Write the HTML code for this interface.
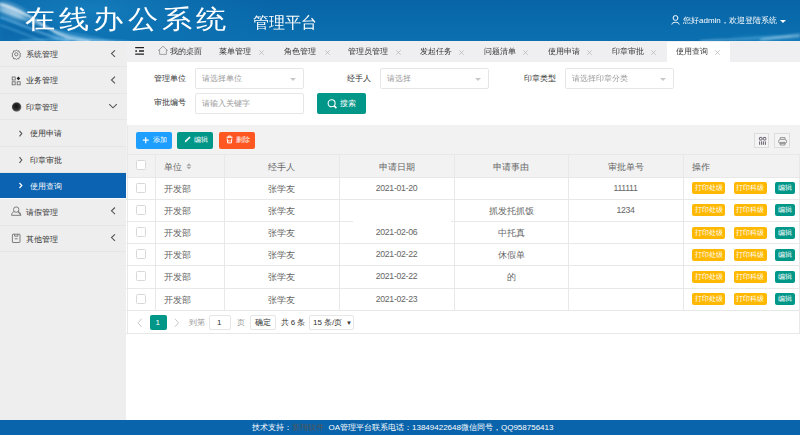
<!DOCTYPE html>
<html><head><meta charset="utf-8">
<style>
*{margin:0;padding:0;box-sizing:border-box;}
html,body{width:800px;height:435px;overflow:hidden;background:#fff;font-family:"Liberation Sans",sans-serif;color:#333;}
.abs{position:absolute;}
.t8{font-size:8px;line-height:10px;white-space:nowrap;position:absolute;}
#hdr{position:absolute;left:0;top:0;width:800px;height:41px;background:#0b68b1;overflow:hidden;}
#title{position:absolute;left:25px;top:3.5px;font-size:30px;letter-spacing:4.2px;color:#fff;white-space:nowrap;line-height:36px;transform:scaleY(0.86);transform-origin:0 0;}
#sub{position:absolute;left:253px;top:12.5px;font-size:16px;color:#fff;white-space:nowrap;line-height:20px;}
#side{position:absolute;left:0;top:41px;width:126.5px;height:379px;background:#eeeeee;}
.si{position:absolute;left:0;width:126.5px;height:26.4px;border-bottom:1px solid #e6e6e6;color:#333;}
.si .t{left:26px;top:9px;}
.si .sub{left:30px;top:9px;}
.si.act{background:#0b63b1;color:#fff;border-bottom:1px solid #fafafa;}
#tabs{position:absolute;left:126px;top:41px;width:674px;height:21px;background:#efeff1;}
.tab{color:#333;top:6px;}
.x{position:absolute;top:7px;}
.lbl{color:#333;}
.inp{position:absolute;height:21px;border:1px solid #e6e6e6;border-radius:2px;background:#fff;}
.inp .t8{left:6px;top:5px;color:#999;}
.caret{position:absolute;width:0;height:0;border-left:3.5px solid transparent;border-right:3.5px solid transparent;border-top:3.5px solid #c8c8c8;top:8.5px;}
.btn{position:absolute;border-radius:2px;color:#fff;}
.cell{position:absolute;color:#666;}
.tb{font-size:8.6px !important;}
.hl{position:absolute;background:#e8e8e8;}
.cb{position:absolute;width:10px;height:10px;border:1px solid #d8d8d8;border-radius:1.5px;background:#fff;}
.ob{position:absolute;height:12px;width:33px;background:#ffb800;border-radius:2px;}
.ob .t8{color:#fff;left:0;width:33px;text-align:center;top:1px;font-size:7px;}
.eb{position:absolute;height:12px;width:20px;background:#009688;border-radius:2px;}
.eb .t8{color:#fff;left:0;width:20px;text-align:center;top:1px;font-size:7px;}
</style></head><body>
<div id="hdr">
  <svg class="abs" style="left:0;top:0" width="800" height="41">
    <defs>
      <filter id="bl" x="-50%" y="-50%" width="200%" height="200%"><feGaussianBlur stdDeviation="3"/></filter>
      <filter id="bl1" x="-20%" y="-50%" width="140%" height="200%"><feGaussianBlur stdDeviation="0.9"/></filter>
      <linearGradient id="hg" x1="0" y1="0" x2="0" y2="1"><stop offset="0" stop-color="#0864a6"/><stop offset="0.55" stop-color="#096bac"/><stop offset="1" stop-color="#0c70b0"/></linearGradient>
      <radialGradient id="hg2" cx="90" cy="8" r="200" gradientUnits="userSpaceOnUse" gradientTransform="translate(90 8) scale(1 0.25) translate(-90 -8)"><stop offset="0" stop-color="#1a85c4" stop-opacity="0.7"/><stop offset="0.6" stop-color="#137dbd" stop-opacity="0.25"/><stop offset="1" stop-color="#0f74bb" stop-opacity="0"/></radialGradient>
    </defs>
    <rect x="0" y="0" width="800" height="41" fill="url(#hg)"/>
    <rect x="0" y="0" width="800" height="41" fill="url(#hg2)"/>
    <rect x="0" y="22" width="50" height="19" fill="#0a5ea3" opacity="0.35" filter="url(#bl)"/>
    <ellipse cx="12" cy="11" rx="16" ry="4.5" transform="rotate(24 12 11)" fill="#f0f9ff" opacity="0.75" filter="url(#bl)"/>
    <ellipse cx="80" cy="39" rx="30" ry="3" transform="rotate(10 80 39)" fill="#9fdcff" opacity="0.45" filter="url(#bl)"/>
    <g fill="none" filter="url(#bl1)">
      <path d="M0,4 C15,8 30,16 48,28 C60,36 75,41 90,42" stroke="#ffffff" stroke-width="1.3" opacity="0.95"/>
      <path d="M0,10 C20,16 45,28 70,36 C85,40 100,42 115,42" stroke="#d8f2ff" stroke-width="1.2" opacity="0.7"/>
      <path d="M0,17 C20,24 40,33 60,39 L70,42" stroke="#9fdaff" stroke-width="1.4" opacity="0.7"/>
      <path d="M0,25 C15,30 30,36 45,42" stroke="#7cc8f3" stroke-width="1.2" opacity="0.6"/>
      <path d="M20,41 C50,38 90,39 130,42" stroke="#8fd4f8" stroke-width="1.5" opacity="0.5"/>
      <path d="M700,41 C740,39 770,38 800,34" stroke="#bfe9ff" stroke-width="1.2" opacity="0.6"/>
      <path d="M760,40 C775,38 790,37 800,36" stroke="#ffffff" stroke-width="1.2" opacity="0.8"/>
    </g>
    <ellipse cx="770" cy="40" rx="40" ry="3" fill="#3aa3d8" opacity="0.45" filter="url(#bl)"/>
  </svg>
  <div id="title">在线办公系统</div>
  <div id="sub">管理平台</div>
  <svg class="abs" style="left:671px;top:15px" width="9" height="10"><circle cx="4.5" cy="3" r="2.4" fill="none" stroke="#fff" stroke-width="1"/><path d="M0.8,9.5 C1,6.5 8,6.5 8.2,9.5" fill="none" stroke="#fff" stroke-width="1"/></svg>
  <div class="t8" style="left:683px;top:16px;color:#fff;">您好admin，欢迎登陆系统</div>
  <div class="caret" style="left:780px;top:20px;border-top-color:#fff;border-left-width:3.5px;border-right-width:3.5px;"></div>
</div>
<div id="side">
<div class="si" style="top:0.0px"><span class="t8 t">系统管理</span></div>
<div class="si" style="top:26.4px"><span class="t8 t">业务管理</span></div>
<div class="si" style="top:52.8px"><span class="t8 t">印章管理</span></div>
<div class="si" style="top:79.2px"><span class="t8 sub">使用申请</span></div>
<div class="si" style="top:105.6px"><span class="t8 sub">印章审批</span></div>
<div class="si act" style="top:132.0px"><span class="t8 sub">使用查询</span></div>
<div class="si" style="top:158.4px"><span class="t8 t">请假管理</span></div>
<div class="si" style="top:184.8px"><span class="t8 t">其他管理</span></div>
</div>

<svg class="abs" style="left:0;top:41px" width="126" height="220">
 <g fill="none" stroke="#707070" stroke-width="0.9">
  <circle cx="16.3" cy="13.3" r="1.6"/>
  <path d="M16.3,9 L17.4,10.1 L19,9.9 L19.2,11.5 L20.6,12.5 L19.9,14 L20.6,15.3 L19.1,16.3 L18.9,17.8 L17.4,17.6 L16.3,18.6 L15.2,17.6 L13.6,17.8 L13.4,16.3 L12,15.3 L12.7,13.9 L12,12.5 L13.4,11.5 L13.6,9.9 L15.2,10.1 Z"/>
  <rect x="12.2" y="36" width="3" height="3"/><rect x="12.2" y="40.8" width="3" height="3"/><rect x="17.2" y="40.8" width="3" height="3"/>
  <path d="M9,51.5" />
  <circle cx="16.2" cy="168.6" r="2.7"/>
  <path d="M11.6,174.3 C11.8,171.2 13.5,170.6 14.4,170.8 M18,170.8 C18.9,170.6 20.6,171.2 20.8,174.3 Z M11.6,174.3 L20.8,174.3"/>
  <rect x="12.4" y="193.2" width="7.6" height="8.3" rx="0.5"/>
  <path d="M14.6,193.2 L14.6,195.2 L17.8,195.2 L17.8,193.2 M14.8,197.8 L17.6,197.8"/>
 </g>
 <path d="M18.4,35.6 L20.2,37.4 L18.4,39.2 L16.6,37.4 Z" fill="#222"/>
 <defs><radialGradient id="rg" cx="0.45" cy="0.4" r="0.6"><stop offset="0" stop-color="#111"/><stop offset="0.7" stop-color="#333"/><stop offset="1" stop-color="#777"/></radialGradient></defs>
 <circle cx="16.6" cy="66" r="4.6" fill="url(#rg)"/><circle cx="16.6" cy="66" r="4.3" fill="none" stroke="#555" stroke-width="0.6" opacity="0.6"/>
 <g fill="none" stroke="#555" stroke-width="1.1">
  <path d="M115,9.3 L111.5,12.6 L115,15.9"/>
  <path d="M115,35.7 L111.5,39 L115,42.3"/>
  <path d="M109.2,63.2 L113,66.8 L116.8,63.2"/>
  <path d="M115,166.5 L111.5,169.8 L115,173.1"/>
  <path d="M115,193.3 L111.5,196.6 L115,199.9"/>
  <path d="M19.5,89.8 L21.8,92.6 L19.5,95.4"/>
  <path d="M19.5,116.2 L21.8,119 L19.5,121.8"/>
 </g>
 <path d="M19.5,142 L21.8,144.5 L19.5,147" fill="none" stroke="#fff" stroke-width="1.2"/>
</svg>
<div id="tabs">
<div class="abs" style="left:541px;top:1px;width:63px;height:20px;background:#fff;"></div>
<svg class="abs" style="left:0;top:0" width="60" height="21"><g stroke="#222" stroke-width="1.3"><path d="M9.2,6.6 L18,6.6 M13,10 L18,10 M9.2,13.2 L18,13.2"/></g><rect x="9.3" y="9.3" width="1.7" height="1.5" fill="#222"/><path d="M32,9.9 L37,5.2 L42,9.9 M33.6,8.6 L33.6,13.4 L40.4,13.4 L40.4,8.6" fill="none" stroke="#999" stroke-width="0.9" stroke-linejoin="round"/></svg>
<div class="t8 tab" style="left:44px;">我的桌面</div>
<div class="t8 tab" style="left:93px;">菜单管理</div>
<svg class="abs" style="left:132.5px;top:9px" width="5" height="5"><path d="M0.3,0.3 L4.7,4.7 M4.7,0.3 L0.3,4.7" stroke="#b8b8b8" stroke-width="0.8"/></svg>
<div class="t8 tab" style="left:157.5px;">角色管理</div>
<svg class="abs" style="left:199px;top:9px" width="5" height="5"><path d="M0.3,0.3 L4.7,4.7 M4.7,0.3 L0.3,4.7" stroke="#b8b8b8" stroke-width="0.8"/></svg>
<div class="t8 tab" style="left:222px;">管理员管理</div>
<svg class="abs" style="left:269.5px;top:9px" width="5" height="5"><path d="M0.3,0.3 L4.7,4.7 M4.7,0.3 L0.3,4.7" stroke="#b8b8b8" stroke-width="0.8"/></svg>
<div class="t8 tab" style="left:294px;">发起任务</div>
<svg class="abs" style="left:333px;top:9px" width="5" height="5"><path d="M0.3,0.3 L4.7,4.7 M4.7,0.3 L0.3,4.7" stroke="#b8b8b8" stroke-width="0.8"/></svg>
<div class="t8 tab" style="left:357.5px;">问题清单</div>
<svg class="abs" style="left:396.5px;top:9px" width="5" height="5"><path d="M0.3,0.3 L4.7,4.7 M4.7,0.3 L0.3,4.7" stroke="#b8b8b8" stroke-width="0.8"/></svg>
<div class="t8 tab" style="left:421.5px;">使用申请</div>
<svg class="abs" style="left:461px;top:9px" width="5" height="5"><path d="M0.3,0.3 L4.7,4.7 M4.7,0.3 L0.3,4.7" stroke="#b8b8b8" stroke-width="0.8"/></svg>
<div class="t8 tab" style="left:486px;">印章审批</div>
<svg class="abs" style="left:525px;top:9px" width="5" height="5"><path d="M0.3,0.3 L4.7,4.7 M4.7,0.3 L0.3,4.7" stroke="#b8b8b8" stroke-width="0.8"/></svg>
<div class="t8 tab" style="left:549.5px;">使用查询</div>
<svg class="abs" style="left:588.5px;top:9px" width="5" height="5"><path d="M0.3,0.3 L4.7,4.7 M4.7,0.3 L0.3,4.7" stroke="#b8b8b8" stroke-width="0.8"/></svg>
</div>
<div class="abs" style="left:127px;top:62px;width:673px;height:63px;background:#fff;">
  <div class="t8 lbl" style="left:27px;top:12px;">管理单位</div>
  <div class="inp" style="left:68px;top:6px;width:109px;"><span class="t8">请选择单位</span><div class="caret" style="left:94px;"></div></div>
  <div class="t8 lbl" style="left:220px;top:12px;">经手人</div>
  <div class="inp" style="left:253px;top:6px;width:109px;"><span class="t8">请选择</span><div class="caret" style="left:94px;"></div></div>
  <div class="t8 lbl" style="left:397px;top:12px;">印章类型</div>
  <div class="inp" style="left:438px;top:6px;width:109px;"><span class="t8">请选择印章分类</span><div class="caret" style="left:94px;"></div></div>
  <div class="t8 lbl" style="left:27px;top:36px;">审批编号</div>
  <div class="inp" style="left:68px;top:30.5px;width:109px;"><span class="t8">请输入关键字</span></div>
  <div class="btn" style="left:190px;top:30.5px;width:49px;height:21px;background:#009688;"><svg class="abs" style="left:10px;top:6px" width="11" height="10"><circle cx="4.6" cy="4.3" r="3.5" fill="none" stroke="#fff" stroke-width="1.1"/><path d="M7.2,6.9 L9.4,9.1" stroke="#fff" stroke-width="1.6"/></svg><span class="t8" style="left:22.5px;top:6.5px;color:#fff;">搜索</span></div>
</div>
<div class="abs" style="left:126px;top:125px;width:674px;height:295px;background:#fff;">
<div class="abs" style="left:0;top:0;width:674px;height:29px;background:#f2f2f2;"></div>
<div class="btn" style="left:10px;top:6.5px;width:36px;height:17px;background:#1e9fff;"><span class="t8" style="left:16.5px;top:3.5px;color:#fff;font-size:7px;">添加</span></div>
<div class="btn" style="left:51px;top:6.5px;width:36px;height:17px;background:#009688;"><span class="t8" style="left:16.5px;top:3.5px;color:#fff;font-size:7px;">编辑</span></div>
<div class="btn" style="left:93px;top:6.5px;width:36px;height:17px;background:#ff5722;"><span class="t8" style="left:16.5px;top:3.5px;color:#fff;font-size:7px;">删除</span></div>
<svg class="abs" style="left:0;top:3px" width="140" height="30"><path d="M16.8,12.2 L22.7,12.2 M19.75,9.2 L19.75,15.3" stroke="#fff" stroke-width="1.2"/><path d="M58.8,14.5 L59.2,12.6 L63.4,8.4 L64.6,9.6 L60.4,13.8 Z" fill="#fff"/><path d="M100.5,9.3 L106.5,9.3 M102.2,9.3 L102.2,8.1 L104.8,8.1 L104.8,9.3 M101.2,10.5 L101.6,14.9 L105.4,14.9 L105.8,10.5" fill="none" stroke="#fff" stroke-width="1"/><path d="M102.6,11.9 L102.8,13.5 M104.2,11.9 L104,13.5" stroke="#fff" stroke-width="0.7"/></svg>
<div class="abs" style="left:628px;top:8px;width:15px;height:15px;border:1px solid #dcdcdc;background:#f4f4f4;"></div>
<div class="abs" style="left:648px;top:8px;width:16px;height:15px;border:1px solid #dcdcdc;background:#f4f4f4;"></div>
<svg class="abs" style="left:628px;top:8px" width="40" height="16"><g fill="none" stroke="#5a5060" stroke-width="0.9"><rect x="5.4" y="4.4" width="2.6" height="2.6" rx="0.6"/><rect x="9.2" y="4.4" width="2.6" height="2.6" rx="0.6"/><path d="M5.6,8.4 L5.6,11.8 M7.6,8.4 L7.6,11.8 M9.4,8.4 L9.4,11.8 M11.4,8.4 L11.4,11.8"/></g><g fill="none" stroke="#8a8a8a" stroke-width="0.9"><path d="M26.2,6.4 L26.2,4.6 L31,4.6 L31,6.4"/><rect x="24.6" y="6.4" width="8" height="4" rx="2"/><path d="M26.2,9.4 L31,9.4 L31,12 L26.2,12 Z"/></g></svg>
</div>
<div class="abs" style="left:126px;top:154px;width:674px;height:22.6px;background:#f2f2f2;"></div>
<div class="hl" style="left:126px;top:154.0px;width:674px;height:1px;"></div>
<div class="hl" style="left:126px;top:176.6px;width:674px;height:1px;"></div>
<div class="hl" style="left:126px;top:198.8px;width:674px;height:1px;"></div>
<div class="hl" style="left:126px;top:221.0px;width:674px;height:1px;"></div>
<div class="hl" style="left:126px;top:243.2px;width:674px;height:1px;"></div>
<div class="hl" style="left:126px;top:265.4px;width:674px;height:1px;"></div>
<div class="hl" style="left:126px;top:287.6px;width:674px;height:1px;"></div>
<div class="hl" style="left:126px;top:309.8px;width:674px;height:1px;"></div>
<div class="hl" style="left:126px;top:333px;width:674px;height:1px;"></div>
<div class="hl" style="left:126.5px;top:154px;width:1px;height:155.8px;"></div>
<div class="hl" style="left:155.0px;top:154px;width:1px;height:155.8px;"></div>
<div class="hl" style="left:223.5px;top:154px;width:1px;height:155.8px;"></div>
<div class="hl" style="left:339.0px;top:154px;width:1px;height:155.8px;"></div>
<div class="hl" style="left:454.0px;top:154px;width:1px;height:155.8px;"></div>
<div class="hl" style="left:568.0px;top:154px;width:1px;height:155.8px;"></div>
<div class="hl" style="left:683.0px;top:154px;width:1px;height:155.8px;"></div>
<div class="hl" style="left:799.0px;top:154px;width:1px;height:155.8px;"></div>
<div class="hl" style="left:126.5px;top:309.8px;width:1px;height:23.2px;"></div>
<div class="hl" style="left:126.5px;top:125px;width:1px;height:29px;background:#e8e8e8;"></div>
<div class="hl" style="left:799px;top:309.8px;width:1px;height:23.2px;"></div>
<div class="cb" style="left:135.5px;top:160.0px;"></div>
<div class="t8 tb" style="left:163.5px;top:161.5px;color:#666;">单位</div>
<svg class="abs" style="left:185.5px;top:162.5px" width="6" height="7"><path d="M0.4,2.8 L2.9,0.3 L5.4,2.8 Z M0.4,3.8 L2.9,6.3 L5.4,3.8 Z" fill="#a8a8a8"/></svg>
<div class="t8 tb" style="left:223.5px;width:115.5px;top:161.5px;text-align:center;color:#666;">经手人</div>
<div class="t8 tb" style="left:339px;width:115px;top:161.5px;text-align:center;color:#666;">申请日期</div>
<div class="t8 tb" style="left:454px;width:114px;top:161.5px;text-align:center;color:#666;">申请事由</div>
<div class="t8 tb" style="left:568px;width:115px;top:161.5px;text-align:center;color:#666;">审批单号</div>
<div class="t8 tb" style="left:692px;top:161.5px;color:#666;">操作</div>
<div class="cb" style="left:135.5px;top:182.6px;"></div>
<div class="t8 tb" style="left:163.5px;top:183.6px;color:#666;">开发部</div>
<div class="t8 tb" style="left:223.5px;width:115.5px;top:183.6px;text-align:center;color:#666;">张学友</div>
<div class="t8 tb" style="left:339px;width:115px;top:182.6px;text-align:center;color:#666;"><span style="font-size:8.7px;letter-spacing:-0.3px">2021-01-20</span></div>
<div class="t8 tb" style="left:568px;width:115px;top:182.6px;text-align:center;color:#666;"><span style="font-size:8.7px;letter-spacing:-0.3px">111111</span></div>
<div class="ob" style="left:692px;top:182.1px;"><span class="t8">打印处级</span></div>
<div class="ob" style="left:733.5px;top:182.1px;"><span class="t8">打印科级</span></div>
<div class="eb" style="left:774.5px;top:182.1px;"><span class="t8">编辑</span></div>
<div class="cb" style="left:135.5px;top:204.8px;"></div>
<div class="t8 tb" style="left:163.5px;top:205.8px;color:#666;">开发部</div>
<div class="t8 tb" style="left:223.5px;width:115.5px;top:205.8px;text-align:center;color:#666;">张学友</div>
<div class="t8 tb" style="left:454px;width:114px;top:205.8px;text-align:center;color:#666;">抓发托抓饭</div>
<div class="t8 tb" style="left:568px;width:115px;top:204.8px;text-align:center;color:#666;"><span style="font-size:8.7px;letter-spacing:-0.3px">1234</span></div>
<div class="ob" style="left:692px;top:204.3px;"><span class="t8">打印处级</span></div>
<div class="ob" style="left:733.5px;top:204.3px;"><span class="t8">打印科级</span></div>
<div class="eb" style="left:774.5px;top:204.3px;"><span class="t8">编辑</span></div>
<div class="cb" style="left:135.5px;top:227.0px;"></div>
<div class="t8 tb" style="left:163.5px;top:228.0px;color:#666;">开发部</div>
<div class="t8 tb" style="left:223.5px;width:115.5px;top:228.0px;text-align:center;color:#666;">张学友</div>
<div class="t8 tb" style="left:339px;width:115px;top:227.0px;text-align:center;color:#666;"><span style="font-size:8.7px;letter-spacing:-0.3px">2021-02-06</span></div>
<div class="t8 tb" style="left:454px;width:114px;top:228.0px;text-align:center;color:#666;">中托真</div>
<div class="ob" style="left:692px;top:226.5px;"><span class="t8">打印处级</span></div>
<div class="ob" style="left:733.5px;top:226.5px;"><span class="t8">打印科级</span></div>
<div class="eb" style="left:774.5px;top:226.5px;"><span class="t8">编辑</span></div>
<div class="cb" style="left:135.5px;top:249.2px;"></div>
<div class="t8 tb" style="left:163.5px;top:250.2px;color:#666;">开发部</div>
<div class="t8 tb" style="left:223.5px;width:115.5px;top:250.2px;text-align:center;color:#666;">张学友</div>
<div class="t8 tb" style="left:339px;width:115px;top:249.2px;text-align:center;color:#666;"><span style="font-size:8.7px;letter-spacing:-0.3px">2021-02-22</span></div>
<div class="t8 tb" style="left:454px;width:114px;top:250.2px;text-align:center;color:#666;">休假单</div>
<div class="ob" style="left:692px;top:248.7px;"><span class="t8">打印处级</span></div>
<div class="ob" style="left:733.5px;top:248.7px;"><span class="t8">打印科级</span></div>
<div class="eb" style="left:774.5px;top:248.7px;"><span class="t8">编辑</span></div>
<div class="cb" style="left:135.5px;top:271.4px;"></div>
<div class="t8 tb" style="left:163.5px;top:272.4px;color:#666;">开发部</div>
<div class="t8 tb" style="left:223.5px;width:115.5px;top:272.4px;text-align:center;color:#666;">张学友</div>
<div class="t8 tb" style="left:339px;width:115px;top:271.4px;text-align:center;color:#666;"><span style="font-size:8.7px;letter-spacing:-0.3px">2021-02-22</span></div>
<div class="t8 tb" style="left:454px;width:114px;top:272.4px;text-align:center;color:#666;">的</div>
<div class="ob" style="left:692px;top:270.9px;"><span class="t8">打印处级</span></div>
<div class="ob" style="left:733.5px;top:270.9px;"><span class="t8">打印科级</span></div>
<div class="eb" style="left:774.5px;top:270.9px;"><span class="t8">编辑</span></div>
<div class="cb" style="left:135.5px;top:293.6px;"></div>
<div class="t8 tb" style="left:163.5px;top:294.6px;color:#666;">开发部</div>
<div class="t8 tb" style="left:223.5px;width:115.5px;top:294.6px;text-align:center;color:#666;">张学友</div>
<div class="t8 tb" style="left:339px;width:115px;top:293.6px;text-align:center;color:#666;"><span style="font-size:8.7px;letter-spacing:-0.3px">2021-02-23</span></div>
<div class="ob" style="left:692px;top:293.1px;"><span class="t8">打印处级</span></div>
<div class="ob" style="left:733.5px;top:293.1px;"><span class="t8">打印科级</span></div>
<div class="eb" style="left:774.5px;top:293.1px;"><span class="t8">编辑</span></div>
<div class="abs" style="left:149.5px;top:315px;width:17.5px;height:14.5px;background:#009688;border-radius:2px;"></div>
<div class="t8" style="left:155.5px;top:317.5px;color:#fff;">1</div>
<svg class="abs" style="left:130px;top:314.5px" width="60" height="20"><path d="M11.5,3.8 L8,7.8 L11.5,11.8 M45,3.8 L48.5,7.8 L45,11.8" fill="none" stroke="#c8c8c8" stroke-width="1"/></svg>
<div class="t8" style="left:188.5px;top:317.5px;color:#999;">到第</div>
<div class="abs" style="left:209px;top:315px;width:22px;height:15px;border:1px solid #e6e6e6;border-radius:2px;background:#fff;"></div>
<div class="t8" style="left:217px;top:317.5px;color:#333;">1</div>
<div class="t8" style="left:236.5px;top:317.5px;color:#999;">页</div>
<div class="abs" style="left:249.5px;top:315px;width:26px;height:15px;border:1px solid #e6e6e6;border-radius:2px;background:#fff;"></div>
<div class="t8" style="left:254.5px;top:317.5px;color:#333;font-size:7.5px;">确定</div>
<div class="t8" style="left:280.5px;top:317.5px;color:#333;">共 6 条</div>
<div class="abs" style="left:308.5px;top:315px;width:45px;height:15px;border:1px solid #e6e6e6;border-radius:2px;background:#fff;"></div>
<div class="t8" style="left:313px;top:317.5px;color:#333;">15 条/页</div>
<div class="t8" style="left:346px;top:317.5px;color:#333;font-size:6px;">▼</div>
<div class="abs" style="left:353px;top:200.5px;width:98px;height:27.5px;background:#fff;"></div>
<div class="abs" style="left:0;top:420px;width:800px;height:15px;background:#0964ab;"></div>
<div class="t8" style="left:252px;top:422.5px;color:#fff;">技术支持：<span style="color:#555">新翔软件</span>&nbsp; OA管理平台联系电话：13849422648微信同号，QQ958756413</div>
</body></html>
